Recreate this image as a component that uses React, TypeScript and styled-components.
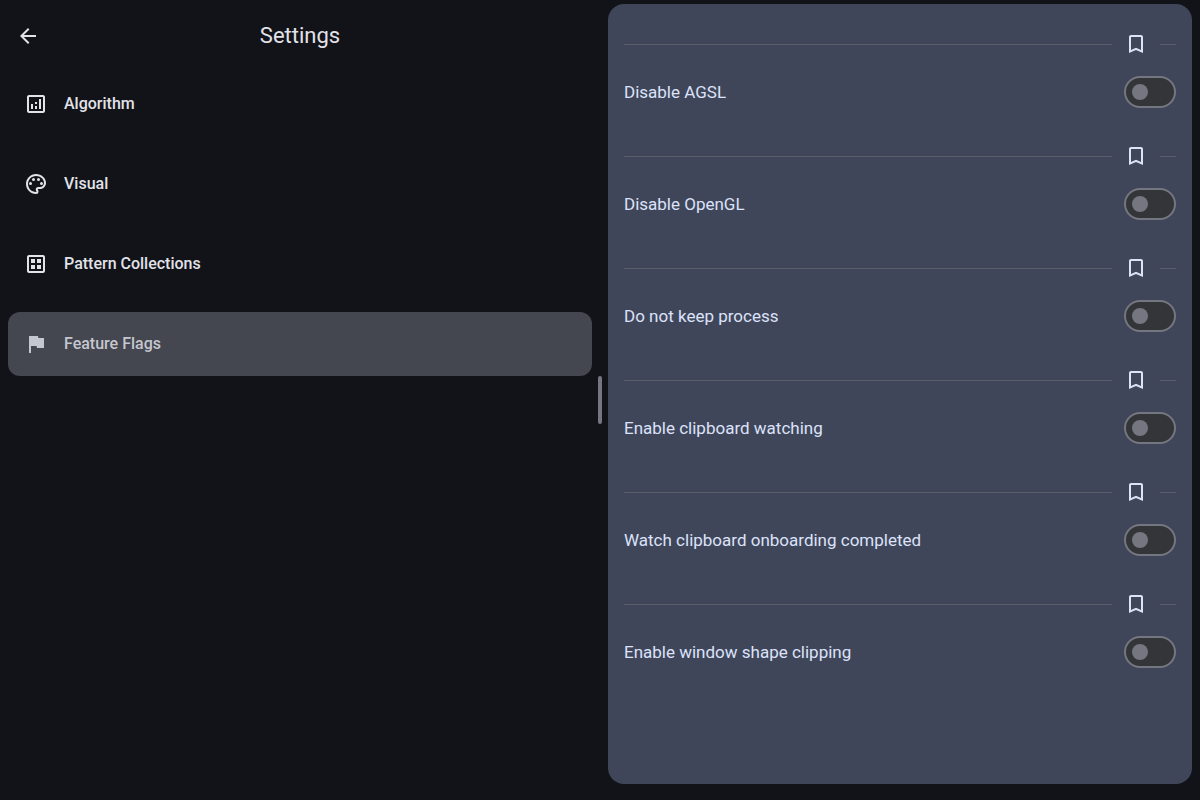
import React, { useState } from "react";
import styled, { createGlobalStyle } from "styled-components";
import type { IconType } from "react-icons";
import {
  MdArrowBack,
  MdBookmarkBorder,
  MdFlag,
  MdOutlineAnalytics,
  MdOutlineDataset,
  MdOutlinePalette,
} from "react-icons/md";

const GlobalStyle = createGlobalStyle`
  *, *::before, *::after { box-sizing: border-box; }
  body {
    margin: 0;
    background: #111318;
    color: #e2e2e9;
    font-family: Roboto, "Liberation Sans", sans-serif;
    font-size: 16px;
    line-height: 24px;
  }
  button, input { font: inherit; }
`;

const Screen = styled.div`
  position: relative;
  display: grid;
  grid-template-columns: minmax(0, 1fr) minmax(0, 1fr);
  min-height: 100vh;
`;

const ListPane = styled.section`
  display: flex;
  flex-direction: column;
`;

const TopBar = styled.header`
  display: grid;
  grid-template-columns: 48px 1fr 48px;
  align-items: center;
  height: 72px;
  padding: 0 4px;
`;

const Title = styled.h1`
  margin: 0;
  font-size: 22px;
  line-height: 28px;
  font-weight: 400;
  text-align: center;
`;

const IconButton = styled.button`
  display: flex;
  flex: none;
  align-items: center;
  justify-content: center;
  width: 48px;
  height: 48px;
  padding: 0;
  border: 0;
  border-radius: 24px;
  background: none;
  color: inherit;
  cursor: pointer;
`;

const CategoryList = styled.nav`
  display: flex;
  flex-direction: column;
  gap: 16px;
  padding: 0 8px;
`;

const CategoryButton = styled.button<{ $selected: boolean }>`
  display: flex;
  align-items: center;
  gap: 16px;
  height: 64px;
  padding: 0 16px;
  border: 0;
  border-radius: 12px;
  background: ${({ $selected }) => ($selected ? "#44474f" : "transparent")};
  color: ${({ $selected }) => ($selected ? "#c4c6d0" : "inherit")};
  font-weight: 500;
  text-align: left;
  cursor: pointer;
`;

const DetailPane = styled.main`
  display: flex;
  padding: 4px 8px 16px;
`;

const DetailCard = styled.div`
  flex: 1;
  min-width: 0;
  padding: 16px;
  border-radius: 16px;
  background: #404659;
  color: #dce2f9;
`;

const Flag = styled.section`
  padding-bottom: 16px;
`;

const FlagDivider = styled.div`
  display: flex;
  align-items: center;
`;

const Rule = styled.span<{ $short?: boolean }>`
  flex: ${({ $short }) => ($short ? "0 0 16px" : "1")};
  height: 1px;
  background: #5b5e6a;
`;

const FlagRow = styled.label`
  display: flex;
  align-items: center;
  justify-content: space-between;
  gap: 16px;
  min-height: 48px;
  font-size: 17px;
  cursor: pointer;
`;

const Switch = styled.input`
  appearance: none;
  display: flex;
  flex: none;
  align-items: center;
  width: 52px;
  height: 32px;
  margin: 0;
  padding: 0 6px;
  border: 2px solid #74777f;
  border-radius: 16px;
  background: #333538;
  cursor: pointer;

  &::before {
    content: "";
    width: 16px;
    height: 16px;
    border-radius: 8px;
    background: #74777f;
  }

  &:checked {
    justify-content: flex-end;
    border-color: #b5c4ff;
    background: #b5c4ff;
  }

  &:checked::before {
    background: #1b2d60;
  }
`;

const PaneHandle = styled.div`
  position: absolute;
  top: 50%;
  left: 50%;
  width: 4px;
  height: 48px;
  border-radius: 2px;
  background: #74777f;
  transform: translate(-50%, -50%);
  cursor: col-resize;
`;

const categories: { label: string; Icon: IconType }[] = [
  { label: "Algorithm", Icon: MdOutlineAnalytics },
  { label: "Visual", Icon: MdOutlinePalette },
  { label: "Pattern Collections", Icon: MdOutlineDataset },
  { label: "Feature Flags", Icon: MdFlag },
];

const flags = [
  "Disable AGSL",
  "Disable OpenGL",
  "Do not keep process",
  "Enable clipboard watching",
  "Watch clipboard onboarding completed",
  "Enable window shape clipping",
];

export default function App() {
  const [selected, setSelected] = useState("Feature Flags");

  return (
    <>
      <GlobalStyle />
      <Screen>
        <ListPane>
          <TopBar>
            <IconButton type="button" aria-label="Back">
              <MdArrowBack size={24} />
            </IconButton>
            <Title>Settings</Title>
          </TopBar>
          <CategoryList aria-label="Settings categories">
            {categories.map(({ label, Icon }) => (
              <CategoryButton
                key={label}
                type="button"
                $selected={label === selected}
                aria-current={label === selected}
                onClick={() => setSelected(label)}
              >
                <Icon size={24} />
                {label}
              </CategoryButton>
            ))}
          </CategoryList>
        </ListPane>
        <DetailPane>
          <DetailCard>
            {flags.map((label) => (
              <Flag key={label}>
                <FlagDivider>
                  <Rule />
                  <IconButton type="button" aria-label={`Bookmark ${label}`}>
                    <MdBookmarkBorder size={24} />
                  </IconButton>
                  <Rule $short />
                </FlagDivider>
                <FlagRow>
                  {label}
                  <Switch type="checkbox" role="switch" />
                </FlagRow>
              </Flag>
            ))}
          </DetailCard>
        </DetailPane>
        <PaneHandle role="separator" aria-orientation="vertical" />
      </Screen>
    </>
  );
}
